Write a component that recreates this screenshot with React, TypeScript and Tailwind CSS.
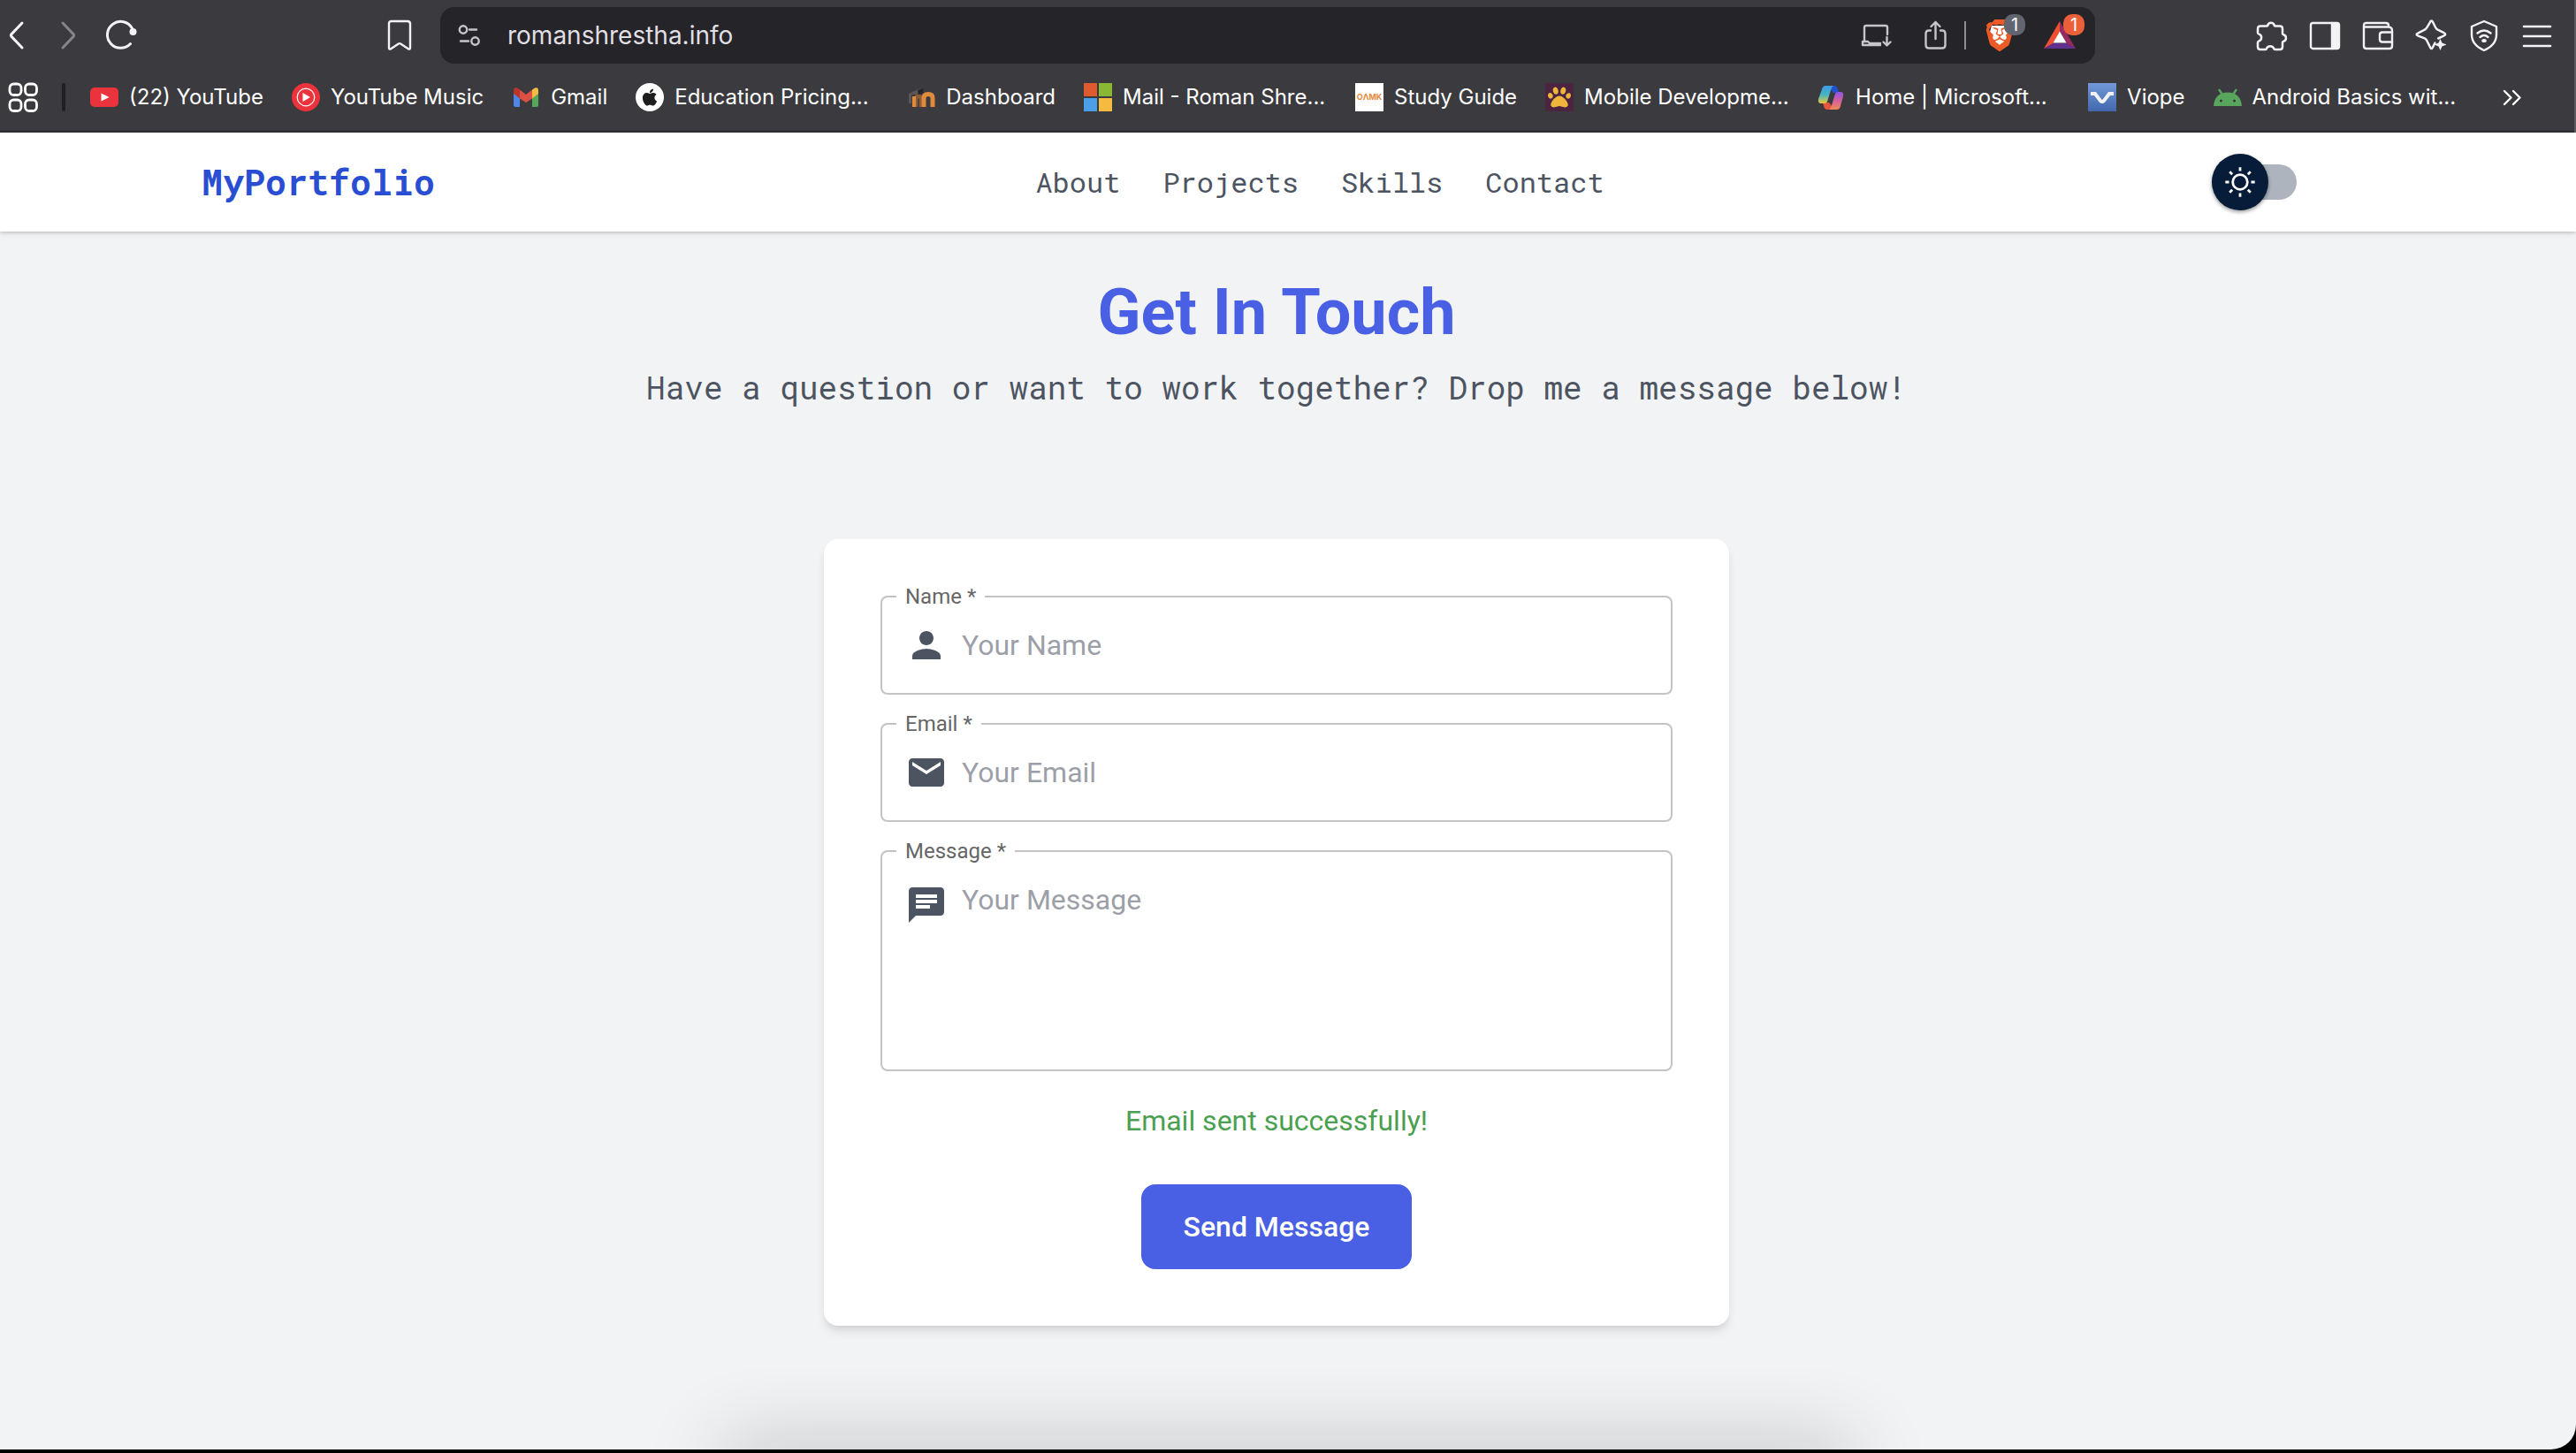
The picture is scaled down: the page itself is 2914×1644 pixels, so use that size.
import { useState } from "react";
import type { ReactNode } from "react";
import { FaApple, FaPaw } from "react-icons/fa";
import { SiBrave } from "react-icons/si";

type IconProps = { children: ReactNode; className?: string };

/* 36px line icon used throughout the browser toolbar */
function LineIcon({ children, className = "" }: IconProps) {
  return (
    <svg
      viewBox="0 0 36 36"
      className={`size-9 shrink-0 ${className}`}
      fill="none"
      stroke="currentColor"
      strokeWidth="2.4"
      strokeLinecap="round"
      strokeLinejoin="round"
      aria-hidden="true"
    >
      {children}
    </svg>
  );
}

function ToolButton({ label, children, className = "" }: { label: string; children: ReactNode; className?: string }) {
  return (
    <button type="button" aria-label={label} className={`relative shrink-0 ${className}`}>
      {children}
    </button>
  );
}

function Toolbar() {
  return (
    <div className="flex h-20 items-center pr-6 text-[#f3f2f5]">
      <div className="flex gap-6">
        <ToolButton label="Back">
          <LineIcon className="stroke-3"><path d="M25 4 13 16.6q-1.200 1.400 0 2.800L25 32" /></LineIcon>
        </ToolButton>
        <ToolButton label="Forward" className="text-[#858488]">
          <LineIcon className="stroke-3"><path d="m11 4 12 12.600q1.200 1.400 0 2.800L11 32" /></LineIcon>
        </ToolButton>
        <ToolButton label="Reload">
          <LineIcon className="stroke-3">
            <path d="M27.500 27.500A15 15 0 1 1 29.500 10" />
            <circle cx="30.500" cy="14" r="4" fill="currentColor" stroke="none" />
          </LineIcon>
        </ToolButton>
      </div>
      <ToolButton label="Bookmark this page" className="ml-[278px]">
        <LineIcon>
          <path d="M9 2h18q3 0 3 3v27q0 2.500-2.200 1.200L19.200 27.500q-1.200-.8-2.400 0L8.200 33.200Q6 34.500 6 32V5q0-3 3-3Z" />
        </LineIcon>
      </ToolButton>

      <div className="ml-7 flex h-16 min-w-0 flex-1 items-center rounded-2xl bg-[#252429] pr-[22px] pl-5 text-[#c6c5c9]">
        <ToolButton label="Site settings">
          <svg viewBox="0 0 28 28" className="size-7" fill="none" stroke="currentColor" strokeWidth="2.400" strokeLinecap="round" aria-hidden="true">
            <circle cx="6" cy="7.500" r="4.200" />
            <path d="M13 7.500h8M3 20.500h9" />
            <circle cx="19.500" cy="20.500" r="4.200" />
          </svg>
        </ToolButton>
        <input
          aria-label="Address"
          defaultValue="romanshrestha.info"
          className="ml-7 min-w-0 flex-1 bg-transparent text-[28px] leading-10 text-[#e0dfe3] outline-none"
        />
        <ToolButton label="Install page">
          <LineIcon>
            <path d="M5 25V9q0-2 2-2h22q2 0 2 2v8" />
            <path d="M3 29h20M3 29v-4h6l2 2h12" />
            <path d="M30.500 20v9M26.500 25.500l4 4 4-4" />
          </LineIcon>
        </ToolButton>
        <ToolButton label="Share" className="ml-8">
          <LineIcon>
            <path d="M12 12.500H10q-3.500 0-3.500 3.500v13q0 3.500 3.500 3.500h15q3.500 0 3.500-3.500V16q0-3.500-3.500-3.500h-2" />
            <path d="M17.500 22V3M12.500 8l5-5 5 5" />
          </LineIcon>
        </ToolButton>
        <span className="mx-3.5 h-8 w-0.5 bg-[#8f8e93]" />
        <ToolButton label="Brave Shields" className="mr-8 ml-1.5">
          <span className="relative block size-9">
            <svg viewBox="0 0 36 36" className="absolute inset-0 size-9" aria-hidden="true">
              <path d="M9 7h18l2 7-3 12-8 6-8-6-3-12z" fill="#fff" />
            </svg>
            <SiBrave className="absolute inset-0 size-9 text-[#ec5a27]" />
          </span>
          <span className="absolute -top-1.5 left-[23px] flex h-6 min-w-6 items-center justify-center rounded-[10px] bg-[#62646f] text-[20px] leading-6 text-white">1</span>
        </ToolButton>
        <ToolButton label="Brave Rewards">
          <svg viewBox="0 0 36 36" className="size-9" aria-hidden="true">
            <path d="M18 2 0 33l10.500-6L18 13.500z" fill="#f0502f" />
            <path d="m18 2 18 31-10.500-6L18 13.500z" fill="#962a62" />
            <path d="M0 33h36l-10.500-6h-15z" fill="#62308f" />
            <path d="m18 13.500 7.500 13h-15z" fill="#fff" />
          </svg>
          <span className="absolute -top-1.5 left-[22px] flex h-6 min-w-6 items-center justify-center rounded-[10px] bg-[#ea603a] text-[20px] leading-6 text-white">1</span>
        </ToolButton>
      </div>

      <div className="ml-[182px] flex gap-6">
        <ToolButton label="Extensions">
          <LineIcon className="stroke-[2.500]">
            <path d="M5 7.500h7.200c.8 0 1.200-.6 1.200-1.400a4 4 0 0 1 7.200 0c0 .8.4 1.400 1.200 1.400H27q3 0 3 3v5.200c0 1 .5 1.300 1.200 1.500a4 4 0 0 1 0 7.600c-.7.2-1.200.5-1.200 1.500V31q0 3-3 3h-5.500c-1 0-1.200-.7-1.400-1.400a4.500 4.500 0 0 0-8 0c-.2.7-.4 1.400-1.400 1.400H5q-3 0-3-3v-5c0-1 .8-1.300 1.500-1.600a4.200 4.200 0 0 0 0-7.800C2.800 16.300 2 16 2 15v-4.500q0-3 3-3Z" />
          </LineIcon>
        </ToolButton>
        <ToolButton label="Sidebar">
          <LineIcon>
            <rect x="2" y="4" width="32" height="29" rx="2.500" />
            <path d="M25 4h7q2 0 2 2v25q0 2-2 2h-7z" fill="currentColor" stroke="none" />
            <path d="M26 4v29" />
          </LineIcon>
        </ToolButton>
        <ToolButton label="Wallet">
          <LineIcon>
            <path d="M30 8.500V7q0-3-3-3H5Q2 4 2 7v23q0 3 3 3h26q3 0 3-3V13q0-4.500-4-4.500H2.500" />
            <path d="M34 14.500H23q-3 0-3 3v5q0 3 3 3h11" />
          </LineIcon>
        </ToolButton>
        <ToolButton label="Leo AI">
          <LineIcon className="stroke-[2.500]">
            <path d="M22.500 26.500 20.200 31q-1.700 4-3.400 0l-3.600-7.200q-.8-1.600-2.400-2.400L3.600 18.700q-4-1.700 0-3.400l7.200-3.600q1.600-.8 2.400-2.400l3.600-6q1.700-3.500 3.400 0l3 6q.8 1.600 2.400 2.400l6.600 3.200q4 2 0 3.800l-6 2.800" />
            <path d="m28.500 22 2 4.500 5 2-5 2-2 4.500-2-4.500-5-2 5-2z" fill="currentColor" stroke="none" />
          </LineIcon>
        </ToolButton>
        <ToolButton label="VPN">
          <LineIcon>
            <path d="M18 2 32 8v9c0 8-5 14-14 18C9 31 4 25 4 17V8z" />
            <path d="M10.500 15.500q7.500-6 15 0M13.500 20q4.500-4 9 0" />
            <ellipse cx="18" cy="24" rx="2.800" ry="2" fill="currentColor" stroke="none" />
          </LineIcon>
        </ToolButton>
        <ToolButton label="Menu">
          <LineIcon className="stroke-[2.600]">
            <path d="M3 8h30M3 19h30M3 30h30" />
          </LineIcon>
        </ToolButton>
      </div>
    </div>
  );
}

function Favicon({ children }: { children: ReactNode }) {
  return (
    <svg viewBox="0 0 32 32" className="size-8 shrink-0" aria-hidden="true">
      {children}
    </svg>
  );
}

const bookmarks: { label: string; cut?: boolean; icon: ReactNode }[] = [
  {
    label: "(22) YouTube",
    icon: (
      <Favicon>
        <rect y="5" width="32" height="22" rx="5" fill="#ea333c" />
        <path d="m12.500 11.500 9 4.500-9 4.500z" fill="#fff" />
      </Favicon>
    ),
  },
  {
    label: "YouTube Music",
    icon: (
      <Favicon>
        <circle cx="16" cy="16" r="16" fill="#ea333c" />
        <circle cx="16" cy="16" r="9.800" fill="none" stroke="#fff" strokeWidth="1.200" />
        <path d="m12.500 11 8.500 5-8.500 5z" fill="#fff" />
      </Favicon>
    ),
  },
  {
    label: "Gmail",
    icon: (
      <Favicon>
        <path d="M2 8v17q0 2 2 2h5V13z" fill="#4f86ec" />
        <path d="M30 8v17q0 2-2 2h-5V13z" fill="#55a85a" />
        <path d="M23 7.500 26 5.500q4-1.500 4 3V12l-7 5.500z" fill="#f2bd42" />
        <path d="M9 7.500 6 5.500q-4-1.500-4 3V12l7 5.500z" fill="#b8362c" />
        <path d="m9 7.500 7 5.500 7-5.500v10L16 22l-7-4.500z" fill="#dd5144" />
      </Favicon>
    ),
  },
  {
    label: "Education Pricing...",
    cut: true,
    icon: (
      <span className="flex size-8 shrink-0 items-center justify-center rounded-full bg-white">
        <FaApple className="size-[22px] text-[#1d1d1f]" aria-hidden="true" />
      </span>
    ),
  },
  {
    label: "Dashboard",
    icon: (
      <Favicon>
        <path d="M10 27V18q0-3 3-3t3 3v9" fill="none" stroke="#8d5c36" strokeWidth="4.500" />
        <path d="M19 27V17q0-4.500 5-4.500t5 4.500v10" fill="none" stroke="#e08a3c" strokeWidth="5" />
        <path d="M8 15v12" stroke="#e08a3c" strokeWidth="4" />
        <path d="M2 12 15 6l5 4-10 3H5v10H2z" fill="#5d5654" />
        <path d="m12 8 6-2 1 5-6 2z" fill="#262428" />
      </Favicon>
    ),
  },
  {
    label: "Mail - Roman Shre...",
    cut: true,
    icon: (
      <Favicon>
        <path d="M0 0h15v15H0z" fill="#e05a30" />
        <path d="M17 0h15v15H17z" fill="#8ab734" />
        <path d="M0 17h15v15H0z" fill="#4a9fe8" />
        <path d="M17 17h15v15H17z" fill="#f5bb40" />
      </Favicon>
    ),
  },
  {
    label: "Study Guide",
    icon: (
      <span className="flex size-8 shrink-0 items-center justify-center bg-white text-[9px] font-bold text-[#e58a3a]" aria-hidden="true">
        OΛMK
      </span>
    ),
  },
  {
    label: "Mobile Developme...",
    cut: true,
    icon: (
      <span className="flex size-8 shrink-0 items-center justify-center bg-[#4b2540]">
        <FaPaw className="size-[26px] text-[#f0b63c]" aria-hidden="true" />
      </span>
    ),
  },
  {
    label: "Home | Microsoft...",
    cut: true,
    icon: (
      <Favicon>
        <defs>
          <linearGradient id="copilotCool" x1="0" y1="0" x2="0" y2="1">
            <stop offset="0" stopColor="#3f9ae8" />
            <stop offset=".5" stopColor="#45b5c4" />
            <stop offset="1" stopColor="#e9c63a" />
          </linearGradient>
          <linearGradient id="copilotWarm" x1="0" y1="0" x2="0" y2="1">
            <stop offset="0" stopColor="#8d55e8" />
            <stop offset=".5" stopColor="#d3609c" />
            <stop offset="1" stopColor="#ee8a52" />
          </linearGradient>
        </defs>
        <path d="M12 3h8q3 0 4 4l1 4h-6z" fill="#2450cf" />
        <path d="M20 30h-8q-3 0-4-4l-1-4h7z" fill="#e5563b" />
        <path d="M10 3h9q-2 1-3 5l-4 13q-1 2-3 2H5q-4 0-3-5L6 7q1-4 4-4Z" fill="url(#copilotCool)" />
        <path d="M23 30h-9q2-1 3-5l4-13q1-2 3-2h3q4 0 3 5l-3 11q-1 4-4 4Z" fill="url(#copilotWarm)" />
      </Favicon>
    ),
  },
  {
    label: "Viope",
    icon: (
      <Favicon>
        <defs>
          <linearGradient id="viopeBlue" x1="0" y1="0" x2="0" y2="1">
            <stop offset="0" stopColor="#7199d8" />
            <stop offset="1" stopColor="#4267ad" />
          </linearGradient>
        </defs>
        <path d="M0 0h32v32H0z" fill="url(#viopeBlue)" />
        <path d="M3 12h5l6 8q2 2 4 0l6-8h5" fill="none" stroke="#f1f1f3" strokeWidth="4" />
      </Favicon>
    ),
  },
  {
    label: "Android Basics wit...",
    cut: true,
    icon: (
      <Favicon>
        <path d="M10 13 6 7M22 13l4-6" fill="none" stroke="#58a55c" strokeWidth="2.400" />
        <path d="M0 26Q1.500 10.500 16 10.500T32 26z" fill="#58a55c" />
        <circle cx="8.500" cy="20" r="1.600" fill="#3b3a3e" />
        <circle cx="23.500" cy="20" r="1.600" fill="#3b3a3e" />
      </Favicon>
    ),
  },
];

function BookmarksBar() {
  return (
    <nav aria-label="Bookmarks" className="flex h-[70px] items-center border-b-2 border-[#302f33] pr-[52px] pb-2 pl-2 text-white">
      <ToolButton label="All apps">
        <LineIcon className="stroke-[2.800]">
          <rect x="3" y="3" width="13" height="12.500" rx="4.500" />
          <rect x="20.500" y="3" width="13" height="12.500" rx="4.500" />
          <rect x="3" y="21" width="13" height="12.500" rx="4.500" />
          <rect x="20.500" y="21" width="13" height="12.500" rx="4.500" />
        </LineIcon>
      </ToolButton>
      <span className="mr-7 ml-[26px] h-8 w-1 shrink-0 rounded-sm bg-[#201f23]" />
      <ul className="flex min-w-0 gap-8 overflow-hidden">
        {bookmarks.map((b) => (
          <li key={b.label} className="shrink-0">
            <a href="#" className="flex items-center gap-3 text-[24px] leading-8">
              {b.icon}
              <span className={b.cut ? "w-[231px] whitespace-nowrap" : "whitespace-nowrap"}>{b.label}</span>
            </a>
          </li>
        ))}
      </ul>
      <ToolButton label="More bookmarks" className="ml-auto">
        <LineIcon>
          <path d="m9 11 7.500 7.500L9 26M19 11l7.500 7.500L19 26" />
        </LineIcon>
      </ToolButton>
    </nav>
  );
}

function ThemeSwitch() {
  const [dark, setDark] = useState(false);
  return (
    <label className="relative flex h-16 w-[124px] cursor-pointer items-center px-3.5">
      <input type="checkbox" role="switch" aria-label="Toggle dark mode" checked={dark} onChange={() => setDark(!dark)} className="peer sr-only" />
      <span className="h-10 w-full rounded-full bg-[#adb4bd]" />
      <span className="absolute left-3.5 flex size-16 items-center justify-center rounded-full bg-[#071c38] shadow-[0_2px_4px_rgba(0,0,0,0.4)] peer-checked:left-[46px]">
        <svg viewBox="0 0 20 20" className="size-10" fill="#fff" aria-hidden="true">
          <path d="M9.305 1.667V3.750h1.389V1.667h-1.390zm-4.707 1.950l-.982.982L5.090 6.072l.982-.982-1.473-1.473zm10.802 0L13.927 5.090l.982.982 1.473-1.473-.982-.982zM10 5.139a4.872 4.872 0 00-4.862 4.860A4.872 4.872 0 0010 14.862 4.872 4.872 0 0014.860 10 4.872 4.872 0 0010 5.139zm0 1.389A3.462 3.462 0 0113.471 10a3.462 3.462 0 01-3.473 3.472A3.462 3.462 0 016.527 10 3.462 3.462 0 0110 6.528zM1.665 9.305v1.390h2.083v-1.390H1.666zm14.583 0v1.390h2.084v-1.390h-2.084zM5.090 13.928L3.616 15.400l.982.982 1.473-1.473-.982-.982zm9.820 0l-.982.982 1.473 1.473.982-.982-1.473-1.473zM9.305 16.250v2.083h1.389V16.250h-1.390z" />
        </svg>
      </span>
    </label>
  );
}

function SiteHeader() {
  return (
    <header className="relative z-10 flex h-28 items-center justify-between bg-white pr-[302px] pl-[228px] font-['Roboto_Mono','Noto_Sans_Mono','Liberation_Mono',monospace] shadow-[0_2px_6px_rgba(0,0,0,0.12),0_1px_3px_rgba(0,0,0,0.12)]">
      <a href="#" className="text-[40px] leading-14 font-bold text-[#2a4ed2]">MyPortfolio</a>
      <nav aria-label="Main" className="flex gap-12 pl-1.5 text-[32px] leading-12 text-[#4d5461]">
        <a href="#about">About</a>
        <a href="#projects">Projects</a>
        <a href="#skills">Skills</a>
        <a href="#contact">Contact</a>
      </nav>
      <ThemeSwitch />
    </header>
  );
}

function Field({ id, label, icon, children }: { id: string; label: string; icon: string; children: ReactNode }) {
  return (
    <fieldset className="min-w-0 rounded-lg border-2 border-[#c4c4c4] px-4 text-[32px] leading-12">
      <legend className="h-0.5 px-2.5 text-[24px] leading-0.5 text-[#666]">
        <label htmlFor={id}>{label} *</label>
      </legend>
      <div className="flex items-start gap-4 px-2.5">
        <svg viewBox="0 0 24 24" className={id === "message" ? "mt-9 size-12 shrink-0" : "mt-[30px] size-12 shrink-0"} fill="#4d5461" aria-hidden="true">
          <path d={icon} />
        </svg>
        {children}
      </div>
    </fieldset>
  );
}

const icons = {
  person: "M12 12c2.210 0 4-1.790 4-4s-1.790-4-4-4-4 1.790-4 4 1.790 4 4 4zm0 2c-2.670 0-8 1.340-8 4v2h16v-2c0-2.660-5.330-4-8-4z",
  mail: "M20 4H4c-1.100 0-1.990.9-1.990 2L2 18c0 1.100.9 2 2 2h16c1.100 0 2-.9 2-2V6c0-1.100-.9-2-2-2zm0 4-8 5-8-5V6l8 5 8-5v2z",
  message: "M20 2H4c-1.100 0-1.990.9-1.990 2L2 22l4-4h14c1.100 0 2-.9 2-2V4c0-1.100-.9-2-2-2zM6 9h12v2H6V9zm8 5H6v-2h8v2zm4-6H6V6h12v2z",
};

function ContactForm() {
  return (
    <form
      onSubmit={(e) => e.preventDefault()}
      className="flex w-full max-w-[1024px] flex-col gap-8 rounded-2xl bg-white p-16 shadow-[0_8px_12px_-2px_rgba(0,0,0,0.1),0_4px_8px_-4px_rgba(0,0,0,0.1)]"
    >
      <Field id="name" label="Name" icon={icons.person}>
        <input id="name" type="text" required placeholder="Your Name" className="h-[108px] min-w-0 flex-1 bg-transparent outline-none placeholder:text-[#9d9fa8]" />
      </Field>
      <Field id="email" label="Email" icon={icons.mail}>
        <input id="email" type="email" required placeholder="Your Email" className="h-[108px] min-w-0 flex-1 bg-transparent outline-none placeholder:text-[#9d9fa8]" />
      </Field>
      <Field id="message" label="Message" icon={icons.message}>
        <textarea id="message" required placeholder="Your Message" className="h-[246px] min-w-0 flex-1 resize-none bg-transparent pt-[30px] outline-none placeholder:text-[#9d9fa8]" />
      </Field>
      <p role="status" className="text-center text-[32px] leading-12 text-[#4a9f50]">Email sent successfully!</p>
      <button type="submit" className="mt-4 self-center rounded-2xl bg-[#495fe4] px-12 py-6 text-[32px] leading-12 font-medium text-white">
        Send Message
      </button>
    </form>
  );
}

export default function App() {
  return (
    <div className="flex min-h-screen flex-col bg-black pb-1 font-['Inter',sans-serif]">
      <div className="relative flex flex-1 flex-col overflow-hidden rounded-br-[28px] bg-[#f2f3f5]">
        <div className="border-r-2 border-[#5c5b60] bg-[#3b3a3e]">
          <Toolbar />
          <BookmarksBar />
        </div>
        <SiteHeader />
        <main className="flex flex-1 flex-col items-center pt-[52px] pr-[26px] font-['Roboto',sans-serif]">
          <h1 className="text-[72px] leading-20 font-bold text-[#495fe4]">Get In Touch</h1>
          <p className="mt-4 mb-36 font-['Roboto_Mono','Noto_Sans_Mono','Liberation_Mono',monospace] text-[36px] leading-14 text-[#4d5461]">
            Have a question or want to work together? Drop me a message below!
          </p>
          <ContactForm />
        </main>
        {/* soft shadow cast by the dock below the window */}
        <div className="pointer-events-none absolute inset-x-[28%] top-full h-10 rounded-3xl shadow-[0_0_90px_rgba(0,0,0,0.3)]" />
      </div>
    </div>
  );
}
